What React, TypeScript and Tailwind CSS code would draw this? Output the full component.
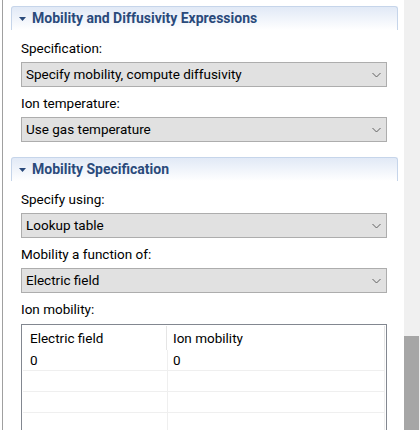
import React from "react";

const fontStack = { fontFamily: 'Roboto, "Noto Sans", "Liberation Sans", sans-serif' };

const Chevron = () => (
  <svg width="9" height="6" viewBox="0 0 9 6" className="shrink-0">
    <path d="M0.5 1 L4.5 5 L8.5 1" fill="none" stroke="#606060" strokeWidth="1" />
  </svg>
);

type SelectProps = { value: string };

const Select = ({ value }: SelectProps) => (
  <div className="flex h-[25px] w-[366px] items-center justify-between border border-[#adadad] bg-[#e1e1e1] pl-[4px] pr-[5px] text-[13.5px] text-black">
    <span>{value}</span>
    <Chevron />
  </div>
);

const Label = ({ text }: { text: string }) => (
  <div className="h-[18px] text-[13.5px] leading-[18px] text-black">{text}</div>
);

const SectionHeader = ({ title }: { title: string }) => (
  <div className="ml-[8px] flex h-[24px] w-[387px] items-center gap-[6px] rounded-t-[3px] border-x border-t border-[#c6d5ea] bg-gradient-to-b from-[#e1e9f6] to-white pl-[7px]">
    <svg width="7" height="4" viewBox="0 0 7 4">
      <path d="M0 0 L7 0 L3.5 4 Z" fill="#2a4a7b" />
    </svg>
    <span className="text-[14px] font-bold text-[#2a4a7b]">{title}</span>
  </div>
);

const tableRows = [
  ["0", "0"],
  ["", ""],
  ["", ""],
  ["", ""],
];

export default function App() {
  return (
    <div className="flex h-[430px] w-[420px] overflow-hidden bg-white" style={fontStack}>
      <div className="ml-[2px] w-[402px] border-l border-[#a0a0a0] pt-[6px]">
        <SectionHeader title="Mobility and Diffusivity Expressions" />
        <div className="flex flex-col pl-[18px] pt-[9px]">
          <Label text="Specification:" />
          <div className="mt-[5px]">
            <Select value="Specify mobility, compute diffusivity" />
          </div>
          <div className="mt-[7px]">
            <Label text="Ion temperature:" />
          </div>
          <div className="mt-[5px]">
            <Select value="Use gas temperature" />
          </div>
        </div>

        <div className="mt-[15px]">
          <SectionHeader title="Mobility Specification" />
        </div>
        <div className="flex flex-col pl-[18px] pt-[9px]">
          <Label text="Specify using:" />
          <div className="mt-[5px]">
            <Select value="Lookup table" />
          </div>
          <div className="mt-[7px]">
            <Label text="Mobility a function of:" />
          </div>
          <div className="mt-[5px]">
            <Select value="Electric field" />
          </div>
          <div className="mt-[7px]">
            <Label text="Ion mobility:" />
          </div>
          <div className="mt-[6px] h-[120px] w-[366px] border border-[#828790] bg-white pl-[1px] pt-[1px] text-[13.5px] text-black">
            <div className="flex h-[24px] w-[362px]">
              <div className="flex w-[144px] items-center border-r border-[#e5e5e5] pl-[7px]">
                Electric field
              </div>
              <div className="flex flex-1 items-center border-r border-[#e5e5e5] pl-[6px]">
                Ion mobility
              </div>
            </div>
            {tableRows.map((row, i) => (
              <div key={i} className="flex h-[21px] w-[362px] border-b border-[#efefef]">
                <div className="flex w-[145px] items-center border-r border-[#efefef] pl-[7px]">
                  {row[0]}
                </div>
                <div className="flex flex-1 items-center border-r border-[#efefef] pl-[5px]">
                  {row[1]}
                </div>
              </div>
            ))}
          </div>
        </div>
      </div>
      <div className="flex w-[16px] flex-col bg-[#f0f0f0]">
        <div className="h-[336px]" />
        <div className="w-[15px] flex-1 bg-[#a6a6a6]" />
      </div>
    </div>
  );
}
